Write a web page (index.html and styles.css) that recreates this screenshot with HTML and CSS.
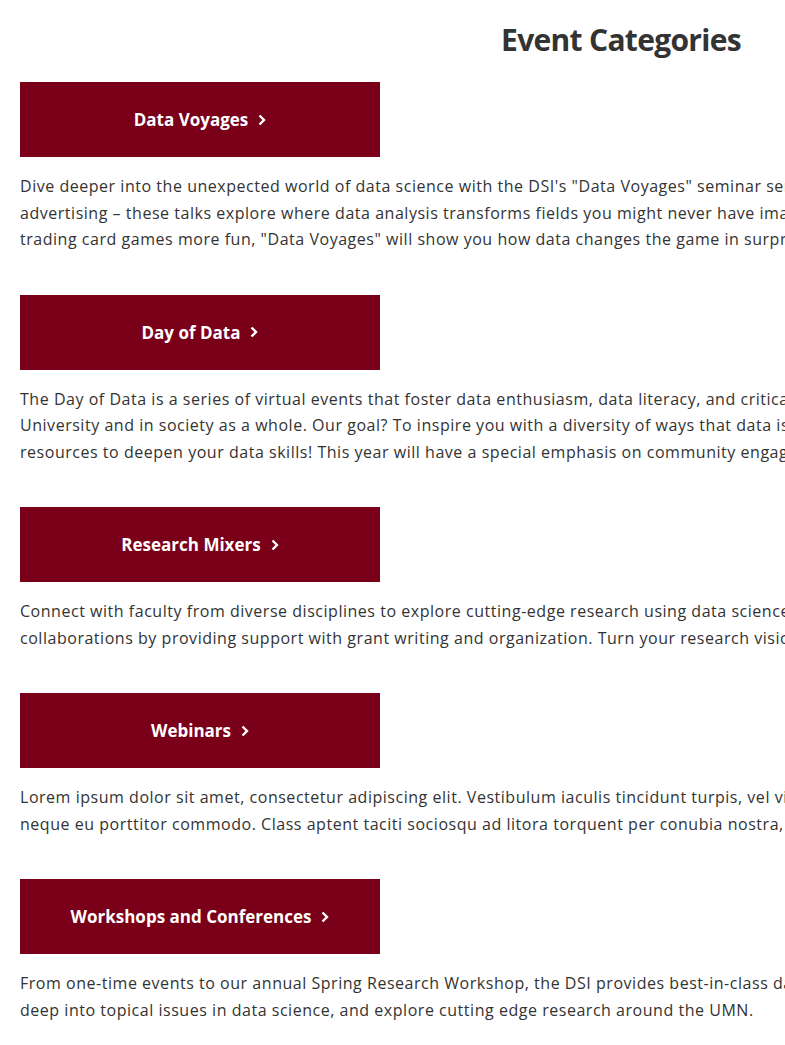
FILE: index.html
```html
<!DOCTYPE html>
<html lang="en">
<head>
<meta charset="utf-8">
<title>Event Categories</title>
<link rel="stylesheet" href="styles.css">
</head>
<body>
<main class="page">
  <h2 class="page-title">Event Categories</h2>

  <section class="category">
    <a class="category-btn" href="#">Data Voyages <svg class="chev" viewBox="0 0 8 12" width="8" height="12"><path d="M1.5 1.5 L6 6 L1.5 10.5" fill="none" stroke="#fff" stroke-width="2.4"/></svg></a>
    <p class="category-text">Dive deeper into the unexpected world of data science with the DSI's "Data Voyages" seminar series. From sports analytics to political<br>advertising – these talks explore where data analysis transforms fields you might never have imagined. Whether it's predicting hits or making<br>trading card games more fun, "Data Voyages" will show you how data changes the game in surprising ways.</p>
  </section>

  <section class="category">
    <a class="category-btn" href="#">Day of Data <svg class="chev" viewBox="0 0 8 12" width="8" height="12"><path d="M1.5 1.5 L6 6 L1.5 10.5" fill="none" stroke="#fff" stroke-width="2.4"/></svg></a>
    <p class="category-text">The Day of Data is a series of virtual events that foster data enthusiasm, data literacy, and critical thinking about data at the<br>University and in society as a whole. Our goal? To inspire you with a diversity of ways that data is used, and to provide you with<br>resources to deepen your data skills! This year will have a special emphasis on community engagement.</p>
  </section>

  <section class="category">
    <a class="category-btn" href="#">Research Mixers <svg class="chev" viewBox="0 0 8 12" width="8" height="12"><path d="M1.5 1.5 L6 6 L1.5 10.5" fill="none" stroke="#fff" stroke-width="2.4"/></svg></a>
    <p class="category-text">Connect with faculty from diverse disciplines to explore cutting-edge research using data science. We foster new interdisciplinary<br>collaborations by providing support with grant writing and organization. Turn your research vision into reality.</p>
  </section>

  <section class="category">
    <a class="category-btn" href="#">Webinars <svg class="chev" viewBox="0 0 8 12" width="8" height="12"><path d="M1.5 1.5 L6 6 L1.5 10.5" fill="none" stroke="#fff" stroke-width="2.4"/></svg></a>
    <p class="category-text">Lorem ipsum dolor sit amet, consectetur adipiscing elit. Vestibulum iaculis tincidunt turpis, vel viverra nisi dapibus ac. Aenean non<br>neque eu porttitor commodo. Class aptent taciti sociosqu ad litora torquent per conubia nostra, per inceptos himenaeos.</p>
  </section>

  <section class="category">
    <a class="category-btn" href="#">Workshops and Conferences <svg class="chev" viewBox="0 0 8 12" width="8" height="12"><path d="M1.5 1.5 L6 6 L1.5 10.5" fill="none" stroke="#fff" stroke-width="2.4"/></svg></a>
    <p class="category-text">From one-time events to our annual Spring Research Workshop, the DSI provides best-in-class data science gatherings where you can dive<br>deep into topical issues in data science, and explore cutting edge research around the UMN.</p>
  </section>
</main>
</body>
</html>
```

FILE: styles.css
```css
html, body {
  margin: 0;
  padding: 0;
  background: #fff;
}

.page {
  width: 1202px;
  padding: 22px 20px 20px;
  font-family: "Open Sans", "Noto Sans", sans-serif;
  color: #333;
}

.page-title {
  margin: 0 0 24px;
  text-align: center;
  font-size: 30px;
  line-height: 36px;
  font-weight: 700;
  letter-spacing: -0.7px;
  color: #333;
}

.category {
  display: flex;
  flex-direction: column;
  align-items: flex-start;
}

.category-btn {
  display: flex;
  align-items: center;
  justify-content: center;
  gap: 10px;
  width: 360px;
  height: 75px;
  background: #7a0019;
  color: #fff;
  text-decoration: none;
  font-size: 17px;
  font-weight: 700;
}

.chev {
  display: block;
}

.category-text {
  margin: 16px 0 42px;
  font-size: 16px;
  line-height: 26.5px;
  letter-spacing: 0.53px;
  color: #333;
  white-space: nowrap;
}
```
